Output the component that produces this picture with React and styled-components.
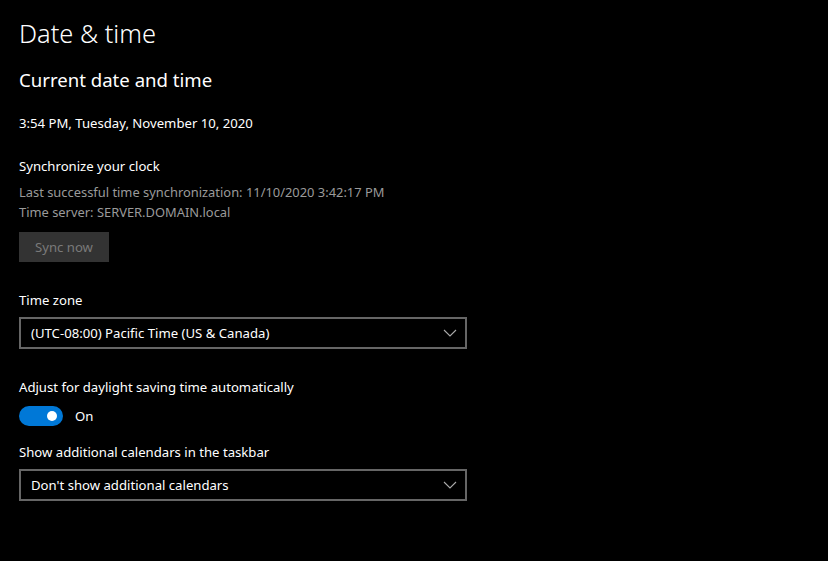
import React, { useState } from "react";
import styled, { createGlobalStyle } from "styled-components";

const GlobalStyle = createGlobalStyle`
    html, body {
        margin: 0;
        padding: 0;
        background: #000;
    }
    body {
        font-family: "Segoe UI", "Noto Sans", "Open Sans", sans-serif;
        color: #fff;
    }
`;

const Page = styled.div`
    width: 828px;
    height: 561px;
    box-sizing: border-box;
    padding: 13px 0 0 19px;
    background: #000;
    overflow: hidden;
`;

const Titulo = styled.h1`
    margin: 0;
    font-size: 25.4px;
    font-weight: 300;
    line-height: 40px;
`;

const Subtitulo = styled.h2`
    margin: 13px 0 0;
    font-size: 18.6px;
    font-weight: 400;
    line-height: 28px;
`;

const Texto = styled.div`
    margin-top: ${(p) => p.$top || 0}px;
    font-size: ${(p) => (p.$muted ? "12.9px" : "13.15px")};
    line-height: 20px;
    color: ${(p) => (p.$muted ? "#9a9a9a" : "#fff")};
`;

const Botao = styled.button`
    margin-top: 10px;
    width: 90px;
    height: 30px;
    border: none;
    background: #333;
    color: #7a7a7a;
    font-family: inherit;
    font-size: 13.15px;
    padding: 0;
    display: block;
`;

const Select = styled.div`
    margin-top: ${(p) => p.$top}px;
    width: 448px;
    height: 32px;
    box-sizing: border-box;
    border: 2px solid #666;
    display: flex;
    align-items: center;
    justify-content: space-between;
    padding: 0 8px 0 10px;
    font-size: 13.15px;
`;

const Chevron = () => (
    <svg width="14" height="8" viewBox="0 0 14 8">
        <path d="M1 1 L7 7 L13 1" fill="none" stroke="#aaa" strokeWidth="1.1" />
    </svg>
);

const ToggleRow = styled.div`
    margin-top: 9px;
    display: flex;
    align-items: center;
    gap: 12px;
    font-size: 13.15px;
`;

const Trilho = styled.div`
    width: 44px;
    height: 20px;
    border-radius: 10px;
    background: ${(p) => (p.$on ? "#0078d7" : "transparent")};
    border: ${(p) => (p.$on ? "none" : "2px solid #ccc")};
    box-sizing: border-box;
    position: relative;
    cursor: pointer;
`;

const Bolinha = styled.div`
    position: absolute;
    top: 5px;
    left: ${(p) => (p.$on ? "28px" : "5px")};
    width: 10px;
    height: 10px;
    border-radius: 50%;
    background: #fff;
`;

export default function App() {
    const [ligado, setLigado] = useState(true);

    return (
        <>
            <GlobalStyle />
            <Page>
                <Titulo>Date &amp; time</Titulo>
                <Subtitulo>Current date and time</Subtitulo>
                <Texto $top={19}>3:54 PM, Tuesday, November 10, 2020</Texto>

                <Texto $top={23}>Synchronize your clock</Texto>
                <Texto $top={6} $muted>
                    Last successful time synchronization: 11/10/2020 3:42:17 PM
                </Texto>
                <Texto $muted>Time server: SERVER.DOMAIN.local</Texto>
                <Botao disabled>Sync now</Botao>

                <Texto $top={28}>Time zone</Texto>
                <Select $top={7}>
                    <span>(UTC-08:00) Pacific Time (US &amp; Canada)</span>
                    <Chevron />
                </Select>

                <Texto $top={28}>Adjust for daylight saving time automatically</Texto>
                <ToggleRow>
                    <Trilho $on={ligado} onClick={() => setLigado(!ligado)}>
                        <Bolinha $on={ligado} />
                    </Trilho>
                    <span>{ligado ? "On" : "Off"}</span>
                </ToggleRow>

                <Texto $top={16}>Show additional calendars in the taskbar</Texto>
                <Select $top={7}>
                    <span>Don't show additional calendars</span>
                    <Chevron />
                </Select>
            </Page>
        </>
    );
}
